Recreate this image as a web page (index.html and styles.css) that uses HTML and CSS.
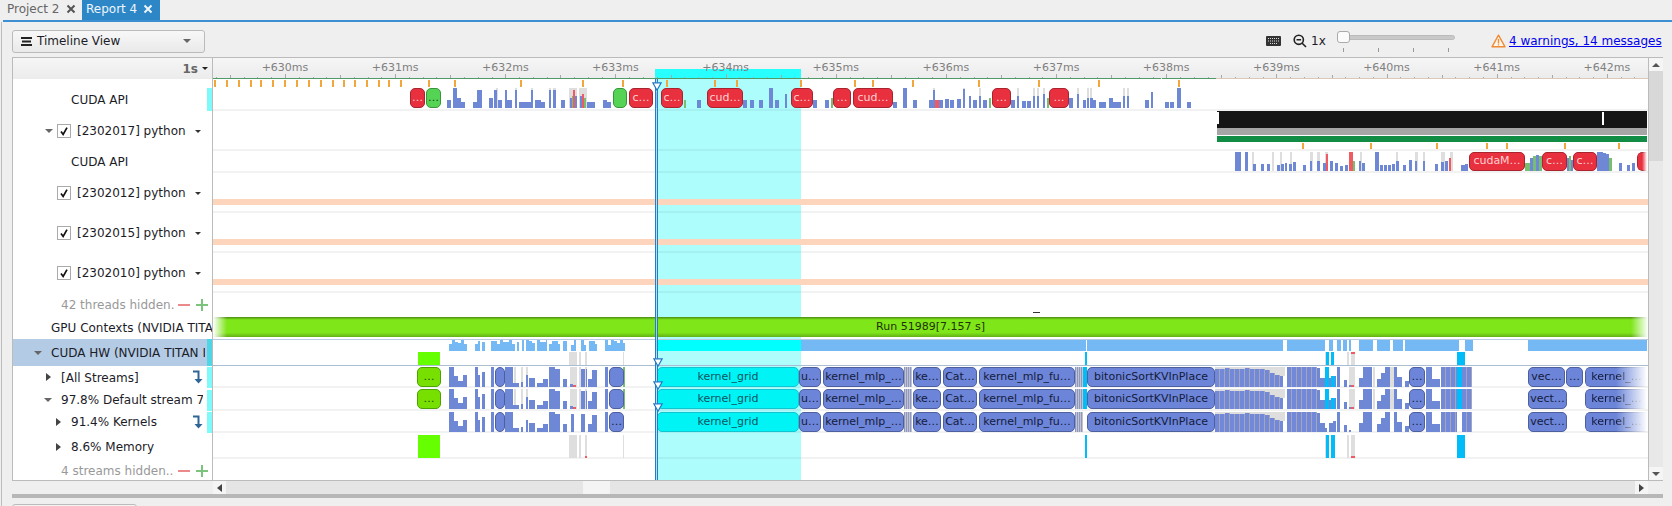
FILE: index.html
```html
<!DOCTYPE html>
<html lang="en">
<head>
    <meta charset="UTF-8">
    <meta name="viewport" content="width=device-width, initial-scale=1.0">
    <title>Report 4 - Timeline View</title>
    <link rel="stylesheet" href="styles.css">
</head>
<body>
    <div class="tabs">
        <div class="tab">Project 2
            <svg class="tab-close" viewBox="0 0 10 10"><path d="M1.5 1.5l7 7M8.5 1.5l-7 7"/></svg>
        </div>
        <div class="tab active">Report 4
            <svg class="tab-close" viewBox="0 0 10 10"><path d="M1.5 1.5l7 7M8.5 1.5l-7 7"/></svg>
        </div>
    </div>

    <div class="workspace">
        <div class="toolbar">
            <div class="combo">
                <svg class="combo-icon" viewBox="0 0 11 9"><path d="M0 0h11v2H0zM1 3.5h9v2H1zM0 7h11v2H0z"/></svg>
                <span>Timeline View</span>
                <i class="tri-down combo-arrow"></i>
            </div>
            <svg class="keyboard" viewBox="0 0 15 10">
                <rect x="0" y="0" width="15" height="10" rx="1" fill="#333"/>
                <path d="M2 2.5h11M2 5h11M4 7.5h7" stroke="#ddd" stroke-width="1.2" stroke-dasharray="1 1" fill="none"/>
            </svg>
            <svg class="zoom-icon" viewBox="0 0 14 14">
                <circle cx="5.8" cy="5.8" r="4.6" fill="none" stroke="#222" stroke-width="1.6"/>
                <path d="M3.5 5.8h4.6M9.2 9.2l3.8 3.8" stroke="#222" stroke-width="1.6" fill="none"/>
            </svg>
            <span class="zoom-level">1x</span>
            <div class="slider">
                <div class="slider-track"></div>
                <div class="slider-handle"></div>
                <div class="slider-ticks"><i></i><i></i><i></i><i></i></div>
            </div>
            <svg class="warn-icon" viewBox="0 0 15 14">
                <path d="M7.5 1.2L14 12.8H1z" fill="#fff7ee" stroke="#f08a35" stroke-width="1.4" stroke-linejoin="round"/>
                <path d="M7.5 5v4.4M7.5 10.2v1.3" stroke="#f08a35" stroke-width="1.4"/>
            </svg>
            <a class="messages" href="#">4 warnings, 14 messages</a>
        </div>

        <div class="panel">
            <div class="labels">
                <div class="labels-head"><span class="scale">1s</span><i class="tri-down small"></i></div>
                <div class="row h32 api"><span>CUDA API</span><i class="swatch"></i></div>
                <div class="row h40 thread-open">
                    <i class="tri-down"></i>
                    <span class="check"><svg viewBox="0 0 14 14"><path d="M3.5 7.5l2.5 3.5 4.5-8"/></svg></span>
                    <span>[2302017] python</span><i class="tri-down small menu"></i>
                </div>
                <div class="row h22 api2"><span>CUDA API</span></div>
                <div class="row h40 thread">
                    <span class="check"><svg viewBox="0 0 14 14"><path d="M3.5 7.5l2.5 3.5 4.5-8"/></svg></span>
                    <span>[2302012] python</span><i class="tri-down small menu"></i>
                </div>
                <div class="row h40 thread">
                    <span class="check"><svg viewBox="0 0 14 14"><path d="M3.5 7.5l2.5 3.5 4.5-8"/></svg></span>
                    <span>[2302015] python</span><i class="tri-down small menu"></i>
                </div>
                <div class="row h40 thread">
                    <span class="check"><svg viewBox="0 0 14 14"><path d="M3.5 7.5l2.5 3.5 4.5-8"/></svg></span>
                    <span>[2302010] python</span><i class="tri-down small menu"></i>
                </div>
                <div class="row h23 hidden-row">
                    <span>42 threads hidden.</span>
                    <svg class="pm first" viewBox="0 0 12 12"><path class="minus" d="M0 6h12"/></svg>
                    <svg class="pm" viewBox="0 0 12 12"><path class="plus" d="M0 6h12M6 0v12"/></svg>
                </div>
                <div class="row h23 gpu"><span>GPU Contexts (NVIDIA TITA</span></div>
                <div class="row h27 hw">
                    <i class="tri-down"></i><span class="clip">CUDA HW (NVIDIA TITAN I</span><i class="swatch dark"></i>
                </div>
                <div class="row h22 stream">
                    <i class="tri-right"></i><span>[All Streams]</span>
                    <svg class="flow" viewBox="0 0 11 14"><path d="M1 1.5h5.5V10"/><path class="head" d="M2.5 9h8l-4 4.5z"/></svg>
                    <i class="swatch"></i>
                </div>
                <div class="row h23 stream-open">
                    <i class="tri-down"></i><span class="clip">97.8% Default stream 7</span><i class="swatch"></i>
                </div>
                <div class="row h22 sub">
                    <i class="tri-right"></i><span>91.4% Kernels</span>
                    <svg class="flow" viewBox="0 0 11 14"><path d="M1 1.5h5.5V10"/><path class="head" d="M2.5 9h8l-4 4.5z"/></svg>
                    <i class="swatch"></i>
                </div>
                <div class="row h26 sub memory"><i class="tri-right"></i><span>8.6% Memory</span></div>
                <div class="row h21 hidden-row last">
                    <span>4 streams hidden..</span>
                    <svg class="pm first" viewBox="0 0 12 12"><path class="minus" d="M0 6h12"/></svg>
                    <svg class="pm" viewBox="0 0 12 12"><path class="plus" d="M0 6h12M6 0v12"/></svg>
                </div>
            </div>

            <div class="canvas">
                <div class="selection"></div>
                <div class="ruler" id="ruler"></div>
                <div class="selection-band"></div>
                <div class="track h32 line" id="api1"></div>
                <div class="track h40 line" id="thread1"></div>
                <div class="track h22 line" id="api2"></div>
                <div class="track h40 line" id="thread2"></div>
                <div class="track h40 line" id="thread3"></div>
                <div class="track h40 line" id="thread4"></div>
                <div class="track h23" id="hidden1"></div>
                <div class="track h23 gpu-track"><div class="run">Run 51989[7.157 s]</div></div>
                <div class="track h27 hw-track" id="hw"></div>
                <div class="track h22 line" id="all"></div>
                <div class="track h23 line" id="default"></div>
                <div class="track h22 line" id="kernels"></div>
                <div class="track h26 line" id="memory"></div>
                <div class="track h21"></div>
                <div class="marker"></div>
                <svg class="pin pin-top" viewBox="0 0 10 9"><path d="M.8.8h8.4L5 8.2z"/></svg>
                <svg class="pin pin-a" viewBox="0 0 10 9"><path d="M.8.8h8.4L5 8.2z"/></svg>
                <svg class="pin pin-b" viewBox="0 0 10 9"><path d="M.8.8h8.4L5 8.2z"/></svg>
                <svg class="pin pin-c" viewBox="0 0 10 9"><path d="M.8.8h8.4L5 8.2z"/></svg>
            </div>

            <div class="vscroll">
                <div class="arrow-btn"><i class="tri-up"></i></div>
                <div class="vthumb"></div>
                <div class="vrest"></div>
                <div class="arrow-btn"><i class="tri-down"></i></div>
            </div>
        </div>

        <div class="hscroll">
            <div class="arrow-btn side"><i class="tri-left"></i></div>
            <div class="hrail"><div class="hthumb"></div></div>
            <div class="arrow-btn side"><i class="tri-right"></i></div>
        </div>
        <div class="splitter"></div>
        <div class="lower-tab"></div>
    </div>

    <script src="timeline.js"></script>
</body>
</html>
```

FILE: styles.css
```css
html, body {
    margin: 0;
    height: 506px;
    overflow: hidden;
}
body {
    font-family: "DejaVu Sans", sans-serif;
    font-size: 12px;
    color: #1c1c28;
    background-color: #efefef;
}

/* tabs */
.tabs {
    display: flex;
    height: 20px;
    margin-left: 3px;
    border-bottom: 2px solid #3d8fd1;
}
.tab {
    display: flex;
    align-items: center;
    gap: 6px;
    width: 75px;
    padding: 0 0 2px 4px;
    color: #666;
}
.tab.active {
    width: 74px;
    background-color: #2d87c6;
    color: #eef5fb;
}
.tab-close {
    width: 10px;
    height: 10px;
    fill: none;
    stroke: #555;
    stroke-width: 2;
}
.active .tab-close {
    stroke: #eef5fb;
}

.workspace {
    position: relative;
    margin-left: 1px;
    padding-left: 10px;
    border-left: 1px solid #bdbdbd;
    height: 484px;
}

/* toolbar */
.toolbar {
    display: flex;
    align-items: center;
    height: 35px;
    padding-top: 3px;
    box-sizing: border-box;
}
.combo {
    display: flex;
    align-items: center;
    width: 193px;
    height: 23px;
    box-sizing: border-box;
    padding: 0 9px 0 8px;
    border: 1px solid #bbb;
    border-radius: 3px;
    background: linear-gradient(#f8f8f8, #e9e9e9);
}
.combo-icon {
    width: 11px;
    height: 9px;
    margin-right: 5px;
    fill: #222;
}
.combo-arrow {
    margin-left: auto;
}
.keyboard {
    width: 15px;
    height: 10px;
    margin-left: 1061px;
}
.zoom-icon {
    width: 14px;
    height: 14px;
    margin-left: 12px;
}
.zoom-level {
    margin-left: 4px;
    width: 26px;
}
.slider {
    position: relative;
    width: 118px;
    height: 24px;
    margin-top: -5px;
}
.slider-track {
    position: absolute;
    left: 5px;
    right: 0;
    top: 8px;
    height: 5px;
    border-radius: 3px;
    background-color: #c9c9c9;
    border: 1px solid #bbb;
    box-sizing: border-box;
}
.slider-handle {
    position: absolute;
    left: 0;
    top: 4px;
    width: 13px;
    height: 12px;
    box-sizing: border-box;
    background-color: #fbfbfb;
    border: 1px solid #aaa;
    border-radius: 3px;
}
.slider-ticks {
    position: absolute;
    left: 6px;
    top: 21px;
    width: 106px;
    display: flex;
    justify-content: space-between;
}
.slider-ticks i {
    width: 1px;
    height: 4px;
    background-color: #999;
}
.warn-icon {
    width: 15px;
    height: 14px;
    margin-left: 36px;
}
.messages {
    margin-left: 3px;
    color: #0000ee;
    white-space: nowrap;
}

/* main panel */
.panel {
    display: flex;
    width: 1651px;
    height: 424px;
    box-sizing: border-box;
    border: 1px solid #bbb;
    background-color: #fff;
}
.labels {
    flex: none;
    width: 200px;
    box-sizing: border-box;
    border-right: 1px solid #bbb;
}
.labels-head {
    display: flex;
    align-items: center;
    justify-content: flex-end;
    height: 21px;
    padding-right: 4px;
    background: linear-gradient(#f6f6f6, #ebebeb);
}
.scale {
    font-weight: bold;
    color: #666;
    margin-right: 4px;
}

.h21 { height: 21px; }
.h22 { height: 22px; }
.h23 { height: 23px; }
.h26 { height: 26px; }
.h27 { height: 27px; }
.h32 { height: 32px; }
.h40 { height: 40px; }

.row {
    display: flex;
    align-items: center;
    box-sizing: border-box;
    white-space: nowrap;
    overflow: hidden;
}
.row.api {
    padding: 9px 0 0 58px;
}
.row.api2 {
    padding: 0 0 1px 58px;
}
.row.thread-open {
    padding: 0 0 0 32px;
}
.row.thread {
    padding: 0 0 0 44px;
}
.row.hidden-row {
    padding: 0 4px 0 48px;
    color: #999;
}
.row.hidden-row.last {
    padding-top: 3px;
}
.row.gpu {
    padding-left: 38px;
}
.row.hw {
    padding-left: 21px;
    background-color: #b3cbe4;
}
.hw .clip {
    margin-left: 5px;
    width: 154px;
    overflow: hidden;
}
.row.stream {
    padding-left: 33px;
}
.row.stream > span {
    padding-top: 1px;
}
.row.stream-open {
    padding-left: 31px;
}
.stream-open .clip {
    margin-left: 5px;
    width: 142px;
    overflow: hidden;
}
.row.sub {
    padding-left: 43px;
}
.row.memory {
    padding-top: 2px;
}
.stream .tri-right, .sub .tri-right {
    margin-right: 10px;
}

.swatch {
    flex: none;
    align-self: flex-end;
    width: 5px;
    height: 21px;
    margin-left: auto;
    margin-right: 0;
    background-color: #7ffafa;
}
.row.api .swatch {
    align-self: stretch;
    height: auto;
}
.row.stream .swatch, .row.sub .swatch {
    margin-left: 4px;
}
.swatch.dark {
    height: 100%;
    background-color: #4fd6e6;
    margin-left: auto;
}
.row.hw .swatch {
    align-self: stretch;
    height: auto;
}

.check {
    flex: none;
    width: 14px;
    height: 14px;
    margin-right: 6px;
    box-sizing: border-box;
    border: 1px solid #aaa;
    background-color: #fff;
}
.check svg {
    display: block;
    width: 12px;
    height: 12px;
    fill: none;
    stroke: #111;
    stroke-width: 2;
}
.menu {
    margin-left: 9px;
}
.flow {
    flex: none;
    width: 11px;
    height: 14px;
    margin-left: auto;
    fill: none;
    stroke: #2e6496;
    stroke-width: 2;
}
.flow .head {
    fill: #2e6496;
    stroke: none;
}
.pm {
    flex: none;
    width: 12px;
    height: 12px;
    margin-left: 6px;
    fill: none;
    stroke-width: 2;
}
.pm.first {
    margin-left: auto;
}
.minus { stroke: #ea8a8a; }
.plus { stroke: #7cc47c; }

/* small triangles */
.tri-down, .tri-up, .tri-left, .tri-right {
    display: block;
    flex: none;
    width: 0;
    height: 0;
}
.tri-down {
    border: 4px solid transparent;
    border-top: 4px solid #666;
    border-bottom: 0;
    margin-right: 4px;
}
.tri-down.small {
    border-width: 3px 3px 0;
    border-top-color: #333;
    margin-right: 0;
}
.labels-head .tri-down.small {
    border-top-color: #222;
}
.tri-up {
    border: 4px solid transparent;
    border-bottom: 4px solid #555;
    border-top: 0;
}
.tri-left {
    border: 4px solid transparent;
    border-right: 5px solid #444;
    border-left: 0;
}
.tri-right {
    border: 4px solid transparent;
    border-left: 5px solid #444;
    border-right: 0;
}

/* timeline canvas: everything in here sits at its time position */
.canvas {
    position: relative;
    flex: none;
    width: 1435px;
    overflow: hidden;
}
.selection {
    position: absolute;
    left: 442px;
    top: 21px;
    bottom: 0;
    width: 146px;
    background-color: #aefdfd;
}
.selection-band {
    position: absolute;
    z-index: 1;
    left: 442px;
    top: 11px;
    width: 146px;
    height: 10px;
    background-color: #28ffff;
}
.ruler {
    position: relative;
    height: 21px;
    background: linear-gradient(#f6f6f6, #ebebeb);
}
.ruler-label {
    position: absolute;
    z-index: 2;
    top: 3px;
    width: 60px;
    text-align: center;
    font-size: 11px;
    font-style: normal;
    color: #808080;
}
.ruler-tick {
    position: absolute;
    z-index: 2;
    bottom: 0;
    width: 1px;
    background-color: #a9a9a9;
}
.ruler-line {
    position: absolute;
    z-index: 2;
    bottom: 0;
    height: 1px;
    background-color: #4f9a67;
}
.ruler-line.rest {
    background-color: #dcc8b8;
}
.track {
    position: relative;
    box-sizing: border-box;
}
.track.line {
    border-bottom: 2px solid rgba(0, 0, 0, 0.05);
}
.hw-track {
    border-top: 1px solid #b9cbe0;
    border-bottom: 1px solid #aabdd2;
}
.gpu-track {
    padding-top: 1px;
}
.run {
    height: 20px;
    line-height: 20px;
    font-size: 11px;
    text-align: center;
    color: #1f3304;
    background: linear-gradient(to right, #fff, rgba(255,255,255,0) 14px, rgba(255,255,255,0) 1418px, #fff),
        linear-gradient(#4c8a12, #7ee619 14%, #7ee619 78%, #63b016);
}

/* timeline items */
.bar, .ev, .tick {
    position: absolute;
    display: block;
}
.bar { background-color: #6f88d6; }
.bar.grey { background-color: #dedede; }
.bar.red { background-color: #ef5a63; }
.bar.green { background-color: #77bd72; }
.bar.cyan { background-color: #00bdfa; }
.bar.sky { background-color: #74b9f3; }
.bar.aqua { background-color: #00ffff; }
.bar.lime { background-color: #66ff00; }
.bar.black { background-color: #161616; }
.bar.mid { background-color: #a6a6a6; }
.bar.forest { background-color: #118c44; }
.bar.peach { background-color: #fdd5bd; }
.bar.white { background-color: #fff; }
.bar.dash { background-color: #333; }
.bar.stripe {
    background: repeating-linear-gradient(to right, #8a97c8 0, #8a97c8 1px, #c4c4c8 1px, #c4c4c8 2px);
}
.bar.dense {
    background: repeating-linear-gradient(to right, #7189d8 0, #7189d8 4px, #a4a6b8 4px, #a4a6b8 5px);
}
.tick {
    width: 2px;
    background-color: #f2a63b;
}
.ev {
    box-sizing: border-box;
    border: 1px solid;
    border-radius: 5px;
    font-size: 11px;
    text-align: center;
    white-space: nowrap;
    overflow: hidden;
}
.ev.blue {
    background-color: #6c85d8;
    border-color: #4e5f9e;
    color: #141b3c;
}
.ev.cyan {
    background-color: #00f4f6;
    border-color: #12c4cf;
    color: #0d5560;
}
.ev.red {
    background-color: #e8303f;
    border-color: #a8242f;
    color: #ffd0d0;
}
.ev.green {
    background-color: #55d355;
    border-color: #39953b;
    color: #14450f;
}
.ev.lime {
    background-color: #78e000;
    border-color: #4aa300;
    color: #244a00;
}
.ev.fade {
    -webkit-mask-image: linear-gradient(to right, #000 50%, transparent);
    mask-image: linear-gradient(to right, #000 50%, transparent);
    border-right: 0;
    border-radius: 5px 0 0 5px;
}
.marker {
    position: absolute;
    left: 442px;
    top: 21px;
    bottom: 0;
    width: 3px;
    box-sizing: border-box;
    background-color: rgba(170, 220, 250, 0.7);
    border-left: 1px solid #2a7cc2;
    border-right: 1px solid #2a7cc2;
}
.pin {
    position: absolute;
    width: 10px;
    height: 9px;
    fill: #fff;
    stroke: #2178c4;
    stroke-width: 1.2;
}
.pin-top { left: 439px; top: 24px; }
.pin-a { left: 440px; top: 300px; }
.pin-b { left: 440px; top: 323px; }
.pin-c { left: 440px; top: 345px; }

/* scrollbars */
.vscroll {
    flex: none;
    width: 14px;
    display: flex;
    flex-direction: column;
    border-left: 1px solid #bbb;
    background-color: #e8e8e8;
}
.arrow-btn {
    display: flex;
    align-items: center;
    justify-content: center;
    flex: none;
    height: 13px;
    background-color: #f5f5f5;
}
.arrow-btn .tri-down {
    margin: 0;
    border-top-color: #555;
}
.vthumb {
    height: 90px;
    background-color: #d8d8d8;
}
.vrest {
    flex: 1;
}
.hscroll {
    display: flex;
    height: 13px;
    width: 1435px;
    margin-left: 201px;
    background-color: #e5e5e5;
}
.arrow-btn.side {
    width: 13px;
    height: 13px;
}
.hrail {
    position: relative;
    flex: 1;
}
.hthumb {
    position: absolute;
    left: 357px;
    width: 27px;
    height: 13px;
    background-color: #f4f4f4;
}
.splitter {
    width: 1651px;
    height: 4px;
    background-color: #b7b7b7;
}
.lower-tab {
    width: 125px;
    height: 6px;
    margin-top: 6px;
    box-sizing: border-box;
    border: 1px solid #bbb;
    border-radius: 3px 3px 0 0;
    background-color: #f4f4f4;
}
```

FILE: timeline.js
```js
// x values below are page pixels, the canvas starts at 213
const ORIGIN = 213;

function add(parent, cls, x, w, top, h, text) {
    const el = document.createElement(text === undefined ? 'i' : 'span');
    el.className = cls;
    el.style.left = (x - ORIGIN) + 'px';
    el.style.width = w + 'px';
    el.style.top = top + 'px';
    el.style.height = h + 'px';
    if (text !== undefined) {
        el.textContent = text;
        el.style.lineHeight = (h - 3) + 'px';
    }
    parent.appendChild(el);
    return el;
}

// bars stand on the bottom of the row: [x, width, height fraction, colour]
function bars(parent, list, top, h) {
    list.forEach(([x, w, f, colour]) => {
        const barH = Math.round(h * f);
        add(parent, 'bar' + (colour ? ' ' + colour : ''), x, w, top + h - barH, barH);
    });
}

function events(parent, list, top, h) {
    list.forEach(([x, w, text, cls]) => add(parent, 'ev ' + cls, x, w, top, h, text));
}

// ruler
const ruler = document.getElementById('ruler');
for (let i = -7; i * 13.77 + 285 < 1648; i++) {
    const x = Math.round(285 + i * 13.77);
    if (x < ORIGIN) continue;
    const tall = i % 8 === 0 ? 5 : (i % 4 === 0 ? 4 : 2);
    add(ruler, 'ruler-tick', x, 1, 21 - tall, tall);
}
[630, 631, 632, 633, 634, 635, 636, 637, 638, 639, 640, 641, 642].forEach((ms, i) => {
    const label = add(ruler, 'ruler-label', 285 + i * 110.15 - 30, 60, 3, 14);
    label.textContent = '+' + ms + 'ms';
});
add(ruler, 'ruler-line', 213, 948, 20, 1);
add(ruler, 'ruler-line', 1162, 54, 20, 1);
add(ruler, 'ruler-line rest', 1216, 432, 20, 1);

// first CUDA API row
const api1 = document.getElementById('api1');
[214, 226, 238, 250, 260, 272, 284, 296, 308, 320, 332, 343, 354, 366, 378, 388, 400, 428, 454, 520, 582, 622,
    666, 714, 736, 800, 854, 872, 912, 978, 1038, 1098, 1178].forEach(x => add(api1, 'tick', x, 2, 1, 7));
bars(api1, [
    [496, 2, 1, 'grey'], [515, 2, 1, 'grey'], [531, 2, 1, 'grey'], [549, 2, 1, 'grey'], [553, 3, 1, 'grey'],
    [569, 8, 1, 'grey'], [579, 8, 1, 'grey'], [933, 2, 1, 'grey'], [963, 2, 1, 'grey'], [979, 2, 1, 'grey'],
    [1017, 2, 1, 'grey'], [1033, 2, 1, 'grey'], [1037, 2, 1, 'grey'], [1043, 2, 1, 'grey'], [1077, 2, 1, 'grey'],
    [1087, 2, 1, 'grey'], [1090, 2, 1, 'grey'], [1123, 2, 1, 'grey'], [1127, 2, 1, 'grey'],
    [447, 4, .4], [453, 4, 1], [457, 4, .5], [461, 4, .3], [473, 4, .3], [477, 5, .9], [489, 4, .5], [494, 3, .9],
    [498, 4, .4], [505, 2, .9], [507, 5, .4], [515, 2, .9], [519, 4, .3], [523, 4, .3], [527, 4, .3], [531, 2, .9],
    [535, 6, .4], [541, 4, .3], [549, 2, .9], [553, 3, .9], [561, 4, .4], [570, 2, .5], [572, 2, .6, 'green'],
    [573, 2, .9, 'red'], [575, 2, .6], [580, 2, .6], [582, 2, .7, 'red'], [584, 2, .5, 'green'], [587, 4, .3],
    [591, 4, .3], [603, 4, .4], [607, 4, .3], [655, 3, .8], [684, 2, .4, 'green'], [697, 4, .4], [743, 4, .4],
    [750, 4, .4], [759, 4, .4], [769, 4, 1], [775, 4, .4], [785, 2, .7], [813, 4, .4], [825, 4, .4],
    [831, 2, .5, 'green'], [893, 4, .3], [903, 4, 1], [913, 4, .4], [929, 4, .4], [933, 2, .9], [935, 4, .4, 'red'],
    [939, 4, .4], [945, 4, .45], [950, 4, .4], [957, 4, .45], [963, 2, .95], [969, 2, .6], [973, 4, .4], [979, 2, .6],
    [983, 4, .4], [989, 2, .5, 'green'], [1011, 4, .4], [1017, 2, .6], [1022, 4, .35], [1027, 4, .35], [1033, 2, .6],
    [1037, 2, .6], [1043, 2, .7], [1047, 2, .5, 'green'], [1069, 4, .5], [1077, 2, .7], [1083, 3, .4], [1087, 2, .5],
    [1090, 3, .5], [1093, 3, .4], [1099, 3, .3], [1102, 4, .3], [1109, 4, .5], [1113, 4, .3], [1117, 4, .3],
    [1123, 2, .6], [1127, 2, .6], [1145, 4, .4], [1151, 2, .8], [1165, 4, .3], [1170, 4, .3], [1177, 4, 1], [1187, 4, .3]
], 9, 20);
events(api1, [
    [410, 15, '…', 'red'], [426, 15, '…', 'green'], [613, 14, '', 'green'], [629, 24, 'c…', 'red'], [661, 22, 'c…', 'red'],
    [707, 36, 'cud…', 'red'], [791, 22, 'c…', 'red'], [833, 18, '…', 'red'], [853, 40, 'cud…', 'red'],
    [992, 19, '…', 'red'], [1049, 20, '…', 'red']
], 9, 20);

// thread with its own activity
const thread1 = document.getElementById('thread1');
add(thread1, 'bar black', 1217, 430, 0, 17);
add(thread1, 'bar white', 1217, 2, 1, 12);
add(thread1, 'bar white', 1602, 2, 1, 13);
add(thread1, 'bar mid', 1217, 430, 17, 7);
add(thread1, 'bar forest', 1217, 430, 25, 6);
[1302, 1370, 1436, 1486, 1506, 1564, 1618].forEach(x => add(thread1, 'tick', x, 2, 32, 6));

// second CUDA API row
const api2 = document.getElementById('api2');
bars(api2, [
    [1252, 2, 1, 'grey'], [1272, 2, 1, 'grey'], [1280, 2, 1, 'grey'], [1290, 2, 1, 'grey'], [1310, 3, 1, 'grey'],
    [1317, 3, 1, 'grey'], [1325, 3, 1, 'grey'], [1349, 4, 1, 'grey'], [1360, 2, 1, 'grey'], [1375, 4, 1, 'grey'],
    [1396, 2, 1, 'grey'], [1415, 3, 1, 'grey'], [1423, 2, 1, 'grey'], [1441, 4, 1, 'grey'], [1450, 3, 1, 'grey'],
    [1235, 6, 1], [1245, 3, 1], [1253, 3, .35], [1261, 3, .35], [1267, 3, .35], [1277, 3, .3], [1281, 3, .35],
    [1285, 2, .4], [1289, 3, .35], [1293, 3, .45], [1303, 3, .3], [1310, 2, .5], [1317, 3, .5], [1323, 3, .4],
    [1326, 2, .9, 'red'], [1330, 3, .5], [1335, 3, .4], [1340, 3, .25], [1345, 3, .3], [1349, 4, 1, 'red'],
    [1353, 2, .5, 'green'], [1359, 2, .5], [1362, 3, .4], [1375, 4, 1], [1380, 3, .3], [1384, 3, .3], [1388, 3, .3],
    [1392, 3, .35], [1396, 3, .5], [1403, 3, .3], [1409, 3, .6], [1415, 2, .5], [1423, 2, .5], [1435, 3, .35],
    [1441, 3, .45], [1445, 3, .5], [1449, 2, .7, 'red'], [1461, 4, .3], [1465, 3, .35],
    [1525, 5, .4, 'green'], [1530, 3, .7], [1533, 3, .8, 'green'], [1536, 3, .85], [1539, 3, .8, 'green'],
    [1567, 2, .7], [1569, 2, .8, 'green'], [1571, 2, .6], [1597, 6, 1], [1603, 3, .95], [1606, 3, .9], [1609, 3, .7, 'green'],
    [1619, 3, .4], [1627, 3, .3], [1632, 3, .4]
], 1, 19);
events(api2, [[1469, 56, 'cudaM…', 'red'], [1542, 25, 'c…', 'red'], [1573, 24, 'c…', 'red']], 1, 19);
add(api2, 'ev red fade', 1637, 10, 1, 19, '');

// idle threads
['thread2', 'thread3', 'thread4'].forEach(id => {
    add(document.getElementById(id), 'bar peach', 213, 1435, 26, 6);
});
add(document.getElementById('hidden1'), 'bar dash', 1033, 7, 19, 1);

// hardware summary row
const hw = document.getElementById('hw');
const hwRanges = [[449, 467], [475, 480], [482, 485], [491, 515], [517, 519], [522, 524], [526, 535], [537, 547],
    [549, 560], [563, 567], [571, 576], [581, 586], [589, 597], [605, 625], [801, 1086], [1087, 1283], [1287, 1325],
    [1329, 1333], [1337, 1341], [1343, 1347], [1349, 1351], [1359, 1373], [1377, 1390], [1393, 1403], [1405, 1459],
    [1465, 1473], [1528, 1647]];
hwRanges.forEach(([a, b]) => {
    if (a > 800) {
        add(hw, 'bar sky', a, b - a, 0, 11);
        return;
    }
    for (let x = a; x < b; x += 3) {
        const f = .55 + .45 * Math.abs(Math.sin(x * 1.7));
        bars(hw, [[x, Math.min(3, b - x), f, 'sky']], 0, 11);
    }
});
add(hw, 'bar aqua', 656, 145, 0, 11);
add(hw, 'bar lime', 418, 22, 12, 13);
[[569, 8, 'grey'], [579, 2, 'grey'], [585, 2, 'grey'], [623, 1, 'grey'], [1085, 2, 'cyan'], [1325, 2, 'grey'],
    [1326, 3, 'cyan'], [1331, 3, 'cyan'], [1347, 2, 'grey'], [1351, 4, 'grey'], [1457, 8, 'cyan']].forEach(([x, w, c]) => {
    add(hw, 'bar ' + c, x, w, 12, 13);
});
add(hw, 'bar red', 1351, 4, 12, 2);

// kernel rows, the three of them differ only in a few places
const LEFT_BARS = [
    [449, 5, 1], [454, 4, .55], [458, 5, .3], [463, 4, .6], [475, 3, 1], [478, 2, .6], [482, 3, .75], [491, 3, 1],
    [505, 5, 1], [510, 3, 1], [513, 6, .2], [521, 2, .25], [526, 2, .6], [529, 6, .45], [537, 6, .2], [543, 5, .4],
    [549, 6, 1], [555, 5, .9], [563, 4, .4], [581, 4, .9], [588, 4, .4], [592, 5, .85], [605, 3, 1]
];
const RIGHT_BARS = [
    [1287, 30, 1, 'dense'], [1317, 3, .95], [1320, 5, .45], [1329, 4, .45], [1333, 3, .55], [1337, 3, 1], [1344, 3, .35],
    [1349, 2, .1], [1359, 4, .45], [1363, 4, 1], [1367, 5, 1], [1377, 4, .4], [1381, 4, .7], [1385, 5, 1],
    [1394, 3, 1], [1397, 5, .5], [1405, 4, .3], [1426, 6, 1], [1432, 2, .4], [1434, 6, .4], [1441, 16, 1, 'dense'],
    [1462, 10, 1, 'dense']
];
const STRIPES = [[904, 8], [1075, 8]];

function kernelRow(id, top, opts) {
    const row = document.getElementById(id);
    if (opts.grey) {
        bars(row, [[514, 2, 1, 'grey'], [521, 2, 1, 'grey'], [526, 2, 1, 'grey'], [570, 7, 1, 'grey'], [579, 2, 1, 'grey'],
            [585, 2, 1, 'grey'], [1349, 2, 1, 'grey'], [1351, 4, 1, 'grey'], [1373, 2, 1, 'grey'], [1390, 4, 1, 'grey']], top, 20);
    }
    bars(row, LEFT_BARS, top, 20);
    bars(row, RIGHT_BARS, top, 20);
    if (opts.grey) {
        bars(row, [[570, 3, .15], [573, 3, .1, 'red'], [586, 1, .9], [1351, 3, .1, 'red'], [623, 2, 1, 'green']], top, 20);
        bars(row, [[1325, 4, 1, 'cyan'], [1331, 4, .55, 'cyan'], [1457, 5, 1, 'cyan']], top, 20);
        bars(row, [[1083, 4, 1, 'cyan']], top, 20);
    } else {
        bars(row, [[571, 3, .9], [581, 3, .9], [1325, 2, .2], [1331, 3, .2]], top, 20);
    }
    STRIPES.forEach(([x, w]) => add(row, 'bar stripe', x, w, top, 20));
    add(row, 'bar dense', 1215, 68, top, 20);
    // the tops of the dense part are uneven, and it tails off towards 1283
    for (let x = 1215; x < 1283; x += 5) {
        const tail = x > 1262 ? (x - 1262) * 0.45 : 0;
        const cap = Math.round(1 + Math.abs(Math.sin(x * 0.8)) * 1.5 + tail);
        add(row, 'bar grey', x, 5, top, cap);
    }
    events(row, [
        [495, 10, '', 'blue'], [609, 15, opts.last, 'blue'],
        [657, 142, 'kernel_grid', 'cyan'], [799, 22, 'u…', 'blue'], [823, 81, 'kernel_mlp_…', 'blue'],
        [913, 28, 'ke…', 'blue'], [943, 34, 'Cat…', 'blue'], [979, 96, 'kernel_mlp_fu…', 'blue'],
        [1087, 128, 'bitonicSortKVInPlace', 'blue'], [1409, 16, '…', 'blue']
    ].concat(opts.tail), top, 20);
    if (opts.lime) events(row, [[417, 24, '…', 'lime']], top, 20);
    add(row, 'ev blue fade', 1585, 62, top, 20, 'kernel_…');
}

kernelRow('all', 1, { grey: true, lime: true, last: '', tail: [[1528, 37, 'vec…', 'blue'], [1566, 17, '…', 'blue']] });
kernelRow('default', 1, { grey: true, lime: true, last: '', tail: [[1528, 39, 'vect…', 'blue']] });
kernelRow('kernels', 1, { grey: false, lime: false, last: '…', tail: [[1528, 39, 'vect…', 'blue']] });

// memory row
const memory = document.getElementById('memory');
add(memory, 'bar lime', 418, 22, 2, 23);
[[569, 8, 'grey'], [579, 2, 'grey'], [585, 2, 'grey'], [623, 1, 'grey'], [1085, 2, 'cyan'], [1325, 2, 'grey'],
    [1326, 3, 'cyan'], [1331, 4, 'cyan'], [1347, 2, 'grey'], [1351, 4, 'grey'], [1457, 8, 'cyan']].forEach(([x, w, c]) => {
    add(memory, 'bar ' + c, x, w, 2, 23);
});
add(memory, 'bar red', 1351, 4, 23, 2);
add(memory, 'bar red', 585, 2, 23, 2);
```
